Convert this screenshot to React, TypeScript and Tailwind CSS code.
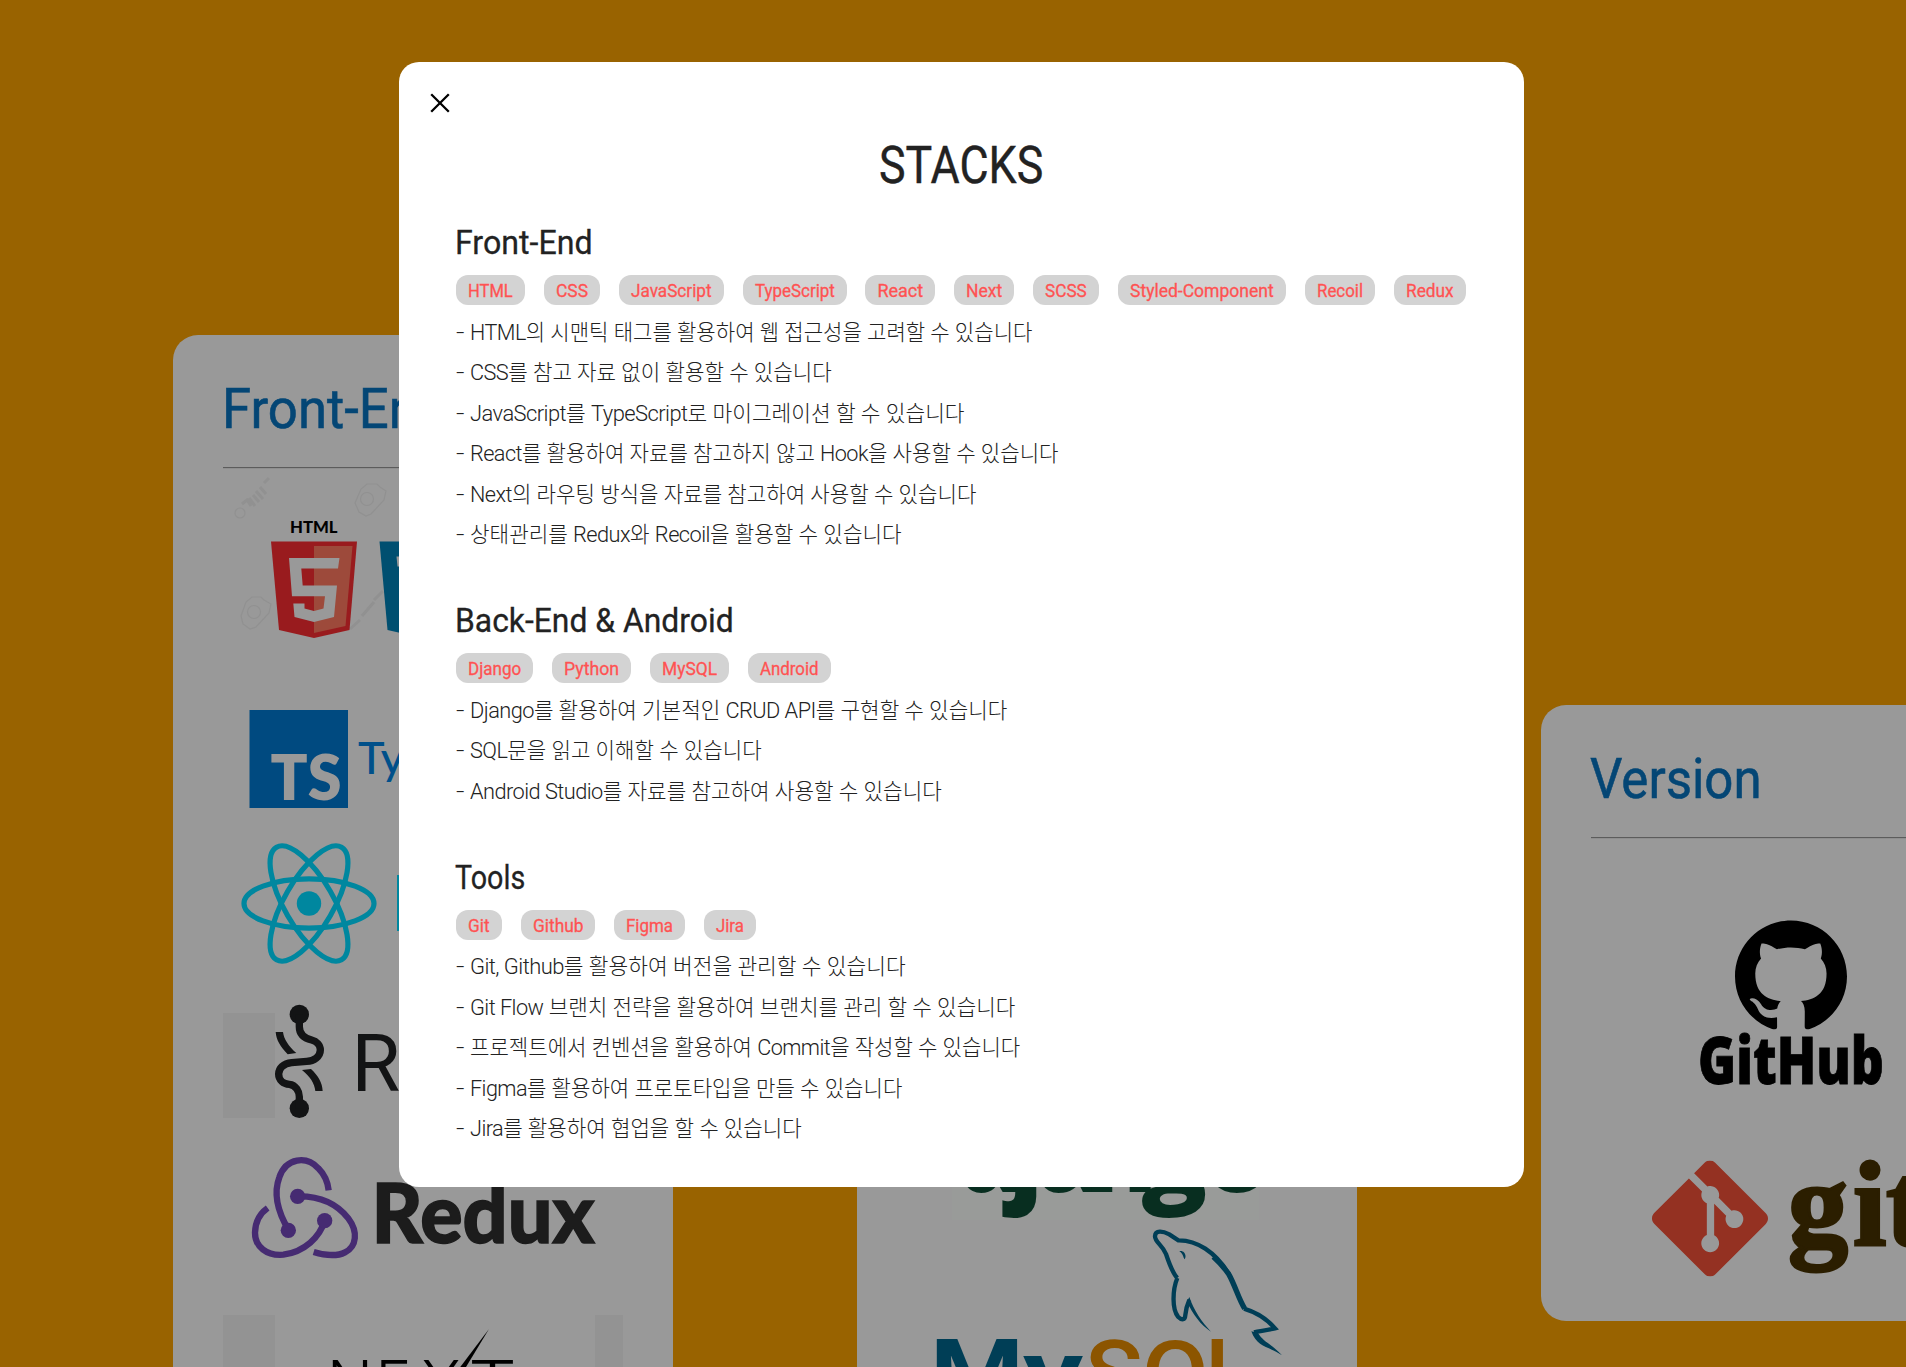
import { useLayoutEffect, useRef, type ReactNode } from 'react';
import { SiGit, SiGithub } from 'react-icons/si';

const latin = /([A-Za-z][A-Za-z,& ]*[A-Za-z])/;

/** Keeps an inline run at exactly `width` pixels by condensing or widening its glyphs. */
function useFit(width: number) {
  const ref = useRef<HTMLSpanElement>(null);
  useLayoutEffect(() => {
    const el = ref.current;
    if (el) el.style.transform = `scaleX(${width / el.offsetWidth})`;
  }, [width]);
  return ref;
}

function FitText({ text, width, className = '' }: { text: string; width: number; className?: string }) {
  const ref = useFit(width);
  return (
    <span ref={ref} className={`inline-block origin-left whitespace-pre ${className}`}>
      {text}
    </span>
  );
}

/** A bullet sentence that mixes Latin and Hangul, fitted as one run after its dash. */
function Line({ text, width }: { text: string; width: number }) {
  const ref = useFit(width - 14);
  return (
    <li className="flex h-[40.5px] leading-[42px] font-light">
      <span className="w-[14px] shrink-0 text-[22px]">
        <span className="inline-block origin-left scale-x-[1.35]">-</span>
      </span>
      <span ref={ref} className="inline-block shrink-0 origin-left whitespace-pre text-[21.5px]">
        {text.split(latin).map((part, i) =>
          latin.test(part) ? (
            <span key={i} className="text-[22px] tracking-[-0.025em]">
              {part}
            </span>
          ) : (
            part
          ),
        )}
      </span>
    </li>
  );
}

type Pair = [string, number];

const sections: { title: Pair; chips: Pair[]; lines: Pair[] }[] = [
  {
    title: ['Front-End', 138],
    chips: [
      ['HTML', 69], ['CSS', 56], ['JavaScript', 105], ['TypeScript', 104], ['React', 70],
      ['Next', 60], ['SCSS', 66], ['Styled-Component', 168], ['Recoil', 70], ['Redux', 72],
    ],
    lines: [
      ['HTML의 시맨틱 태그를 활용하여 웹 접근성을 고려할 수 있습니다', 576],
      ['CSS를 참고 자료 없이 활용할 수 있습니다', 376],
      ['JavaScript를 TypeScript로 마이그레이션 할 수 있습니다', 509],
      ['React를 활용하여 자료를 참고하지 않고 Hook을 사용할 수 있습니다', 603],
      ['Next의 라우팅 방식을 자료를 참고하여 사용할 수 있습니다', 520],
      ['상태관리를 Redux와 Recoil을 활용할 수 있습니다', 445.5],
    ],
  },
  {
    title: ['Back-End & Android', 279],
    chips: [['Django', 77], ['Python', 79], ['MySQL', 79], ['Android', 83]],
    lines: [
      ['Django를 활용하여 기본적인 CRUD API를 구현할 수 있습니다', 551],
      ['SQL문을 읽고 이해할 수 있습니다', 305.5],
      ['Android Studio를 자료를 참고하여 사용할 수 있습니다', 486],
    ],
  },
  {
    title: ['Tools', 70],
    chips: [['Git', 46], ['Github', 74], ['Figma', 71], ['Jira', 52]],
    lines: [
      ['Git, Github를 활용하여 버전을 관리할 수 있습니다', 450],
      ['Git Flow 브랜치 전략을 활용하여 브랜치를 관리 할 수 있습니다', 559],
      ['프로젝트에서 컨벤션을 활용하여 Commit을 작성할 수 있습니다', 564.5],
      ['Figma를 활용하여 프로토타입을 만들 수 있습니다', 446],
      ['Jira를 활용하여 협업을 할 수 있습니다', 346],
    ],
  },
];

function Card({ title, width, className, children }: { title?: string; width?: number; className: string; children: ReactNode }) {
  return (
    <section className={`w-[500px] shrink-0 overflow-hidden rounded-[25px] bg-[#999999] px-[50px] ${className}`}>
      {title && (
        <>
          <h2 className="mt-[41px] h-[66px] text-[56px] leading-[66px] text-[#044675]">
            <FitText text={title} width={width ?? 200} className="-ml-px [-webkit-text-stroke:0.6px_#044675]" />
          </h2>
          <div className="mt-[25px] h-[2px] border-t border-[#5c5c5c] border-b border-b-[#8f8f8f]" />
        </>
      )}
      {children}
    </section>
  );
}

function HtmlCssLogo() {
  return (
    <svg viewBox="223 469 400 200" className="block h-[200px] w-[400px]">
      <g fill="none" stroke="#919191" strokeWidth="1.2">
        <path d="M355 503l6-14 6-5h10l3 3 6 4-2 9-13 14-5 2-7-4zM241 616l5-14 6-5h9l3 3 7 4-2 9-13 14-6 2-7-5z" />
        <circle cx="367" cy="499" r="6.5" />
        <circle cx="254" cy="612" r="6.5" />
        <circle cx="240" cy="513" r="5" />
        <path d="M242 504l5-4 4 6M249 498l6 8M253 495l6 7M256 491l7 8M260 487l6 7M264 483l5-5M350 629l10-9M362 616l12-14M374 600l9-9" strokeWidth="3" />
      </g>
      <text x="290" y="533.3" textLength="47.5" lengthAdjust="spacingAndGlyphs" fontFamily="Lato" fontWeight="900" fontSize="17.5" fill="#000">
        HTML
      </text>
      <path d="M271 541.5h86L349.500 630 314 638l-35-8z" fill="#991b1e" />
      <path d="M314 546h38.500L345.500 626 314 633z" fill="#9d4a3b" />
      <path d="M289 558h50.500L338 568.500H301.300L302.700 585.500H337L334 617 314 622 294.500 617 293.300 603.500H304.500V608.500L314 611 323.500 608.500 325 596.200H292z" fill="#999999" />
      <path d="M379.500 541.500h86L458 630l-35.500 8L387.500 630z" fill="#004f70" />
      <path d="M396.500 556.500h40l-1 10h-38z" fill="#999999" />
    </svg>
  );
}

function TypeScriptLogo() {
  return (
    <svg viewBox="223 669 400 160" className="block h-[160px] w-[400px]">
      <rect x="249.500" y="710" width="98.500" height="98" fill="#004a80" />
      <text x="270.500" y="799.500" textLength="71" lengthAdjust="spacingAndGlyphs" fontFamily="Lato" fontWeight="800" fontSize="62" fill="#999999">
        TS
      </text>
      <text x="358" y="773.500" fontFamily="Lato" fontSize="45" fontWeight="500" fill="#00508a">
        TypeScript
      </text>
    </svg>
  );
}

function ReactLogo() {
  return (
    <svg viewBox="223 829 400 155" className="block h-[155px] w-[400px]">
      <g fill="none" stroke="#00879f" strokeWidth="5.200">
        <ellipse cx="309" cy="903.500" rx="65" ry="24.600" />
        <ellipse cx="309" cy="903.500" rx="65" ry="24.600" transform="rotate(60 309 903.500)" />
        <ellipse cx="309" cy="903.500" rx="65" ry="24.600" transform="rotate(120 309 903.500)" />
      </g>
      <circle cx="309" cy="903.500" r="12.200" fill="#00879f" />
      <rect x="397" y="875" width="8" height="56" fill="#00879f" />
    </svg>
  );
}

function RecoilLogo() {
  return (
    <svg viewBox="223 984 400 150" className="block h-[150px] w-[400px]">
      <rect x="223" y="1013" width="52" height="105" fill="#939393" />
      <g transform="translate(160 680) scale(.33333)" fill="#131415">
        <circle cx="418" cy="1003" r="29" />
        <circle cx="418" cy="1285" r="29" />
        <path
          d="M418 1003V1040C418 1065 435 1075 455 1080C470 1084 481 1095 481 1110C481 1130 462 1143 440 1144L395 1148C370 1150 356 1165 356 1182C356 1200 370 1212 388 1213C408 1215 418 1235 418 1250V1285"
          fill="none"
          stroke="#131415"
          strokeWidth="22"
        />
        <path d="M347 1056H369C372 1078 385 1098 409 1119L383 1123C360 1098 349 1080 347 1056ZM426 1170L453 1167C475 1188 487 1208 488 1233H466C464 1210 450 1190 426 1170Z" />
      </g>
      <text x="351.500" y="1091" fontFamily="Roboto" fontSize="79" fill="#131415">
        Recoil
      </text>
    </svg>
  );
}

function ReduxLogo() {
  return (
    <svg viewBox="223 1134 400 150" className="block h-[150px] w-[400px]">
      <g transform="translate(160 1120) scale(.33333)" fill="#462b72">
        <g fill="none" stroke="#462b72" strokeWidth="19">
          <path d="M386 330C350 270 340 220 358 172C378 112 440 107 475 145C495 165 503 185 506 211" />
          <path d="M414 229C480 228 530 250 565 295C595 335 590 380 555 397C530 410 490 405 461 396" />
          <path d="M494 302C480 350 435 395 370 404C320 408 285 380 285 338C286 305 300 280 323 264" />
        </g>
        <circle cx="385" cy="331" r="23" />
        <circle cx="413" cy="229" r="23" />
        <circle cx="494" cy="302" r="23" />
      </g>
      <text x="371.500" y="1243" textLength="223" lengthAdjust="spacingAndGlyphs" fontFamily="Lato" fontWeight="900" fontSize="82" fill="#1c1c1c" stroke="#1c1c1c" strokeWidth="1.500">
        Redux
      </text>
    </svg>
  );
}

function NextLogo() {
  return (
    <svg viewBox="223 1284 400 150" className="block h-[150px] w-[400px]">
      <rect x="223" y="1315" width="52" height="105" fill="#939393" />
      <rect x="595" y="1315" width="28" height="105" fill="#939393" />
      <text x="327 375.500 421" y="1404" fontFamily="Inter" fontWeight="300" fontSize="60.500" fill="#000">
        NEX
      </text>
      <text x="468" y="1404" textLength="49" lengthAdjust="spacingAndGlyphs" fontFamily="Inter" fontWeight="300" fontSize="60.500" fill="#000">
        T
      </text>
      <path d="M489 1329L466 1367 444 1398 440 1398 458 1370z" fill="#000" />
    </svg>
  );
}

function DjangoLogo() {
  return (
    <svg viewBox="907 1120 400 105" className="block h-[105px] w-[400px]">
      <rect x="952" y="1120" width="307" height="100" fill="#999b99" />
      <text x="955 1008 1036 1084 1141 1202" y="1192" fontFamily="Open Sans" fontWeight="800" fontSize="110" fill="#082e20">
        django
      </text>
    </svg>
  );
}

function MySqlLogo() {
  return (
    <svg viewBox="907 1225 400 200" className="block h-[200px] w-[400px] overflow-visible">
      <g transform="translate(850 1160) scale(.33333)" fill="none" stroke="#003e56" strokeWidth="13">
        <path d="M982 354C968 340 958 312 948 282C937 254 914 246 915 228C916 210 938 213 958 223L985 241C1040 240 1095 275 1137 342" />
        <path d="M1090 290C1110 308 1124 324 1137 344C1155 376 1166 417 1184 446" strokeWidth="16" />
        <path d="M1182 446C1222 458 1255 482 1275 505C1250 511 1230 513 1212 517" />
        <path d="M982 354C967 390 966 448 984 470C996 482 1005 480 1006 465C1007 450 1010 438 1018 420" />
        <path d="M1011 425L1018 411C1032 452 1055 485 1083 515C1050 492 1030 465 1011 425ZM1204 514L1224 519C1240 546 1265 552 1296 586C1262 560 1222 565 1204 514ZM988 274C1000 270 1012 284 1004 298C1000 296 1001 282 988 274Z" fill="#003e56" stroke="none" />
      </g>
      <text x="930" y="1405" textLength="94" lengthAdjust="spacingAndGlyphs" fontFamily="Roboto" fontWeight="700" fontSize="92" fill="#003e56">
        M
      </text>
      <text x="1023" y="1405" textLength="60" lengthAdjust="spacingAndGlyphs" fontFamily="Roboto" fontWeight="700" fontSize="93" fill="#003e56">
        y
      </text>
      <text x="1085" y="1405" textLength="58" lengthAdjust="spacingAndGlyphs" fontFamily="Roboto" fontWeight="500" fontSize="90" fill="#8c5500">
        S
      </text>
      <text x="1142" y="1405" textLength="67" lengthAdjust="spacingAndGlyphs" fontFamily="Roboto" fontWeight="500" fontSize="90" fill="#8c5500">
        Q
      </text>
      <text x="1205" y="1405" fontFamily="Roboto" fontWeight="500" fontSize="92" fill="#8c5500">
        L
      </text>
    </svg>
  );
}

function VersionLogos() {
  return (
    <svg viewBox="1591 839 400 460" className="block h-[460px] w-[400px]">
      <SiGithub x="1735" y="919" size={112} color="#000000" />
      <rect x="1725" y="1029.500" width="130" height="5" fill="#999999" />
      <text x="1698" y="1083.500" textLength="186" lengthAdjust="spacingAndGlyphs" fontFamily="Open Sans" fontWeight="800" fontSize="65" fill="#000" stroke="#000" strokeWidth="0.800">
        GitHub
      </text>
      <SiGit x="1652" y="1160.500" size={116} color="#943122" />
      <text x="1788 1853 1886" y="1245" fontFamily="Liberation Serif" fontWeight="700" fontSize="120" fill="#2b1e00" stroke="#2b1e00" strokeWidth="3">
        git
      </text>
    </svg>
  );
}

function StacksModal() {
  return (
    <div role="dialog" className="absolute top-[62px] left-[399px] h-[1125px] w-[1125px] rounded-[20px] bg-white text-[#222222]">
      <button aria-label="close" className="absolute top-[31px] left-[31px] size-5">
        <svg viewBox="0 0 20 20" className="block size-5" stroke="#000" strokeWidth="2.3">
          <path d="M1.200 1.200l17.600 17.600M18.800 1.200L1.200 18.800" />
        </svg>
      </button>
      <h1 className="flex h-[156px] items-end justify-center">
        <span className="mb-[19px] w-[165px] text-[51px] leading-[66px]">
          <FitText text="STACKS" width={164} className="[-webkit-text-stroke:0.4px_#222222]" />
        </span>
      </h1>
      <div className="flex flex-col gap-[41.25px] pl-[57px]">
        {sections.map((s) => (
          <section key={s.title[0]}>
            <h2 className="h-[48px] text-[34px] leading-[48px]">
              <FitText text={s.title[0]} width={s.title[1]} className="-ml-px [-webkit-text-stroke:0.3px_#222222]" />
            </h2>
            <ul className="mt-[9px] flex gap-[18.85px]">
              {s.chips.map(([label, w]) => (
                <li
                  key={label}
                  className="h-[30px] shrink-0 rounded-[12px] bg-[#d3d3d3] px-[12px] text-[18px] leading-[31px] text-[#ff5252]"
                  style={{ width: w }}
                >
                  <FitText text={label} width={w - 24} className="[-webkit-text-stroke:0.3px_#ff5252]" />
                </li>
              ))}
            </ul>
            <ul className="mt-[6.75px]">
              {s.lines.map(([text, w]) => (
                <Line key={text} text={text} width={w} />
              ))}
            </ul>
          </section>
        ))}
      </div>
    </div>
  );
}

export default function App() {
  return (
    <main className="relative h-[1367px] w-full overflow-hidden bg-[#996300] font-['Roboto','Noto_Sans_CJK_KR',sans-serif]">
      <div className="flex items-start gap-[184px] pl-[173px]">
        <Card title="Front-End" width={226} className="mt-[335px] h-[1200px]">
          <HtmlCssLogo />
          <TypeScriptLogo />
          <ReactLogo />
          <RecoilLogo />
          <ReduxLogo />
          <NextLogo />
        </Card>
        <Card className="mt-[1120px] h-[500px]">
          <DjangoLogo />
          <MySqlLogo />
        </Card>
        <Card title="Version" width={172} className="mt-[704.5px] h-[616px]">
          <VersionLogos />
        </Card>
      </div>
      <StacksModal />
    </main>
  );
}
